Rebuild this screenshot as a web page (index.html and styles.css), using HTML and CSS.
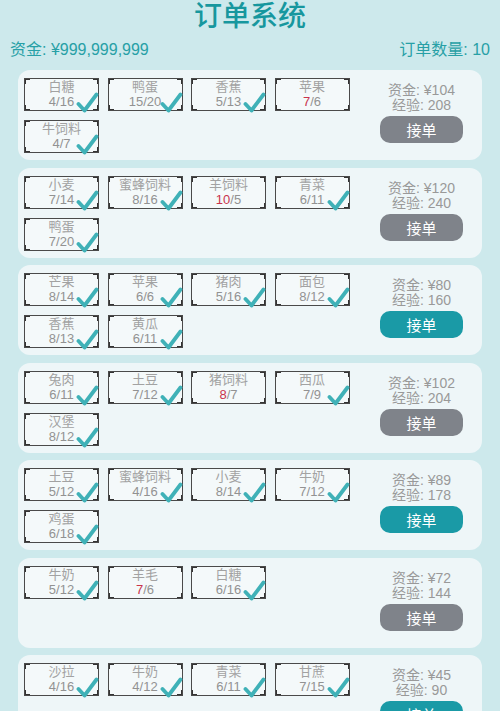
FILE: index.html
```html
<!DOCTYPE html>
<html lang="zh-CN">
<head>
    <meta charset="UTF-8">
    <meta name="viewport" content="width=device-width, initial-scale=1.0">
    <title>订单系统</title>
    <link rel="stylesheet" href="styles.css">
</head>
<body>
    <h1 class="title">订单系统</h1>
    <div class="summary">
        <span>资金: ¥999,999,999</span>
        <span>订单数量: 10</span>
    </div>

    <div class="orders">
        <div class="order">
            <div class="items">
                <div class="item done"><div class="name">白糖</div><div class="count">4/16</div></div>
                <div class="item done"><div class="name">鸭蛋</div><div class="count">15/20</div></div>
                <div class="item done"><div class="name">香蕉</div><div class="count">5/13</div></div>
                <div class="item"><div class="name">苹果</div><div class="count"><span class="short">7</span>/6</div></div>
                <div class="item done"><div class="name">牛饲料</div><div class="count">4/7</div></div>
            </div>
            <div class="reward">
                <div class="stat">资金: ¥104</div>
                <div class="stat">经验: 208</div>
                <button class="take">接单</button>
            </div>
        </div>

        <div class="order">
            <div class="items">
                <div class="item done"><div class="name">小麦</div><div class="count">7/14</div></div>
                <div class="item done"><div class="name">蜜蜂饲料</div><div class="count">8/16</div></div>
                <div class="item"><div class="name">羊饲料</div><div class="count"><span class="short">10</span>/5</div></div>
                <div class="item done"><div class="name">青菜</div><div class="count">6/11</div></div>
                <div class="item done"><div class="name">鸭蛋</div><div class="count">7/20</div></div>
            </div>
            <div class="reward">
                <div class="stat">资金: ¥120</div>
                <div class="stat">经验: 240</div>
                <button class="take">接单</button>
            </div>
        </div>

        <div class="order">
            <div class="items">
                <div class="item done"><div class="name">芒果</div><div class="count">8/14</div></div>
                <div class="item done"><div class="name">苹果</div><div class="count">6/6</div></div>
                <div class="item done"><div class="name">猪肉</div><div class="count">5/16</div></div>
                <div class="item done"><div class="name">面包</div><div class="count">8/12</div></div>
                <div class="item done"><div class="name">香蕉</div><div class="count">8/13</div></div>
                <div class="item done"><div class="name">黄瓜</div><div class="count">6/11</div></div>
            </div>
            <div class="reward">
                <div class="stat">资金: ¥80</div>
                <div class="stat">经验: 160</div>
                <button class="take ready">接单</button>
            </div>
        </div>

        <div class="order">
            <div class="items">
                <div class="item done"><div class="name">兔肉</div><div class="count">6/11</div></div>
                <div class="item done"><div class="name">土豆</div><div class="count">7/12</div></div>
                <div class="item"><div class="name">猪饲料</div><div class="count"><span class="short">8</span>/7</div></div>
                <div class="item done"><div class="name">西瓜</div><div class="count">7/9</div></div>
                <div class="item done"><div class="name">汉堡</div><div class="count">8/12</div></div>
            </div>
            <div class="reward">
                <div class="stat">资金: ¥102</div>
                <div class="stat">经验: 204</div>
                <button class="take">接单</button>
            </div>
        </div>

        <div class="order">
            <div class="items">
                <div class="item done"><div class="name">土豆</div><div class="count">5/12</div></div>
                <div class="item done"><div class="name">蜜蜂饲料</div><div class="count">4/16</div></div>
                <div class="item done"><div class="name">小麦</div><div class="count">8/14</div></div>
                <div class="item done"><div class="name">牛奶</div><div class="count">7/12</div></div>
                <div class="item done"><div class="name">鸡蛋</div><div class="count">6/18</div></div>
            </div>
            <div class="reward">
                <div class="stat">资金: ¥89</div>
                <div class="stat">经验: 178</div>
                <button class="take ready">接单</button>
            </div>
        </div>

        <div class="order">
            <div class="items">
                <div class="item done"><div class="name">牛奶</div><div class="count">5/12</div></div>
                <div class="item"><div class="name">羊毛</div><div class="count"><span class="short">7</span>/6</div></div>
                <div class="item done"><div class="name">白糖</div><div class="count">6/16</div></div>
            </div>
            <div class="reward">
                <div class="stat">资金: ¥72</div>
                <div class="stat">经验: 144</div>
                <button class="take">接单</button>
            </div>
        </div>

        <div class="order">
            <div class="items">
                <div class="item done"><div class="name">沙拉</div><div class="count">4/16</div></div>
                <div class="item done"><div class="name">牛奶</div><div class="count">4/12</div></div>
                <div class="item done"><div class="name">青菜</div><div class="count">6/11</div></div>
                <div class="item done"><div class="name">甘蔗</div><div class="count">7/15</div></div>
            </div>
            <div class="reward">
                <div class="stat">资金: ¥45</div>
                <div class="stat">经验: 90</div>
                <button class="take ready">接单</button>
            </div>
        </div>
    </div>
</body>
</html>
```

FILE: styles.css
```css
:root {
    --bg: #cde9ec;
    --card: #eef6f8;
    --box: #f4f9fa;
    --teal: #17979e;
    --teal-btn: #1a9aa6;
    --gray-btn: #7f838a;
    --text-gray: #999;
    --check: #3fb1b7;
    --short: #c9344c;
    --corner: #333;
}

* {
    box-sizing: border-box;
    margin: 0;
    padding: 0;
}

body {
    font-family: 'Liberation Sans', 'Noto Sans CJK SC', sans-serif;
    background: var(--bg);
    width: 500px;
    height: 711px;
    overflow: hidden;
}

.title {
    font-size: 28px;
    font-weight: 500;
    line-height: 34px;
    text-align: center;
    color: var(--teal);
}

.summary {
    display: flex;
    justify-content: space-between;
    margin-top: 6px;
    padding: 0 10px;
    font-size: 16px;
    line-height: 20px;
    color: #27a0a6;
}

.orders {
    display: flex;
    flex-direction: column;
    gap: 7.5px;
    margin: 10px 18px 0;
}

.order {
    display: flex;
    height: 90px;
    flex-shrink: 0;
    background: var(--card);
    border-radius: 12px;
    padding: 8px 0 0 6px;
}

.items {
    display: grid;
    grid-template-columns: repeat(4, 75px);
    grid-auto-rows: 33px;
    column-gap: 8.5px;
    row-gap: 9px;
    align-content: start;
}

/* frame: grey edges, darker corners */
.item {
    position: relative;
    background:
        linear-gradient(var(--corner), var(--corner)) left top / 5px 1px,
        linear-gradient(var(--corner), var(--corner)) left top / 1px 5px,
        linear-gradient(var(--corner), var(--corner)) right top / 5px 1px,
        linear-gradient(var(--corner), var(--corner)) right top / 1px 5px,
        linear-gradient(var(--corner), var(--corner)) left bottom / 5px 1px,
        linear-gradient(var(--corner), var(--corner)) left bottom / 1px 5px,
        linear-gradient(var(--corner), var(--corner)) right bottom / 5px 1px,
        linear-gradient(var(--corner), var(--corner)) right bottom / 1px 5px,
        var(--box);
    background-repeat: no-repeat;
    border: 1px solid #4a4a4a;
    text-align: center;
    font-size: 13px;
    line-height: 15px;
    color: #a2a2a2;
    padding-top: 0;
}

.item .count {
    color: #929292;
}

.short {
    color: var(--short);
}

.item.done::after {
    content: '';
    position: absolute;
    right: -1px;
    bottom: -3px;
    width: 23px;
    height: 21px;
    background: url("data:image/svg+xml,%3Csvg xmlns='http://www.w3.org/2000/svg' viewBox='0 0 23 21'%3E%3Cpath d='M2.5 12 L8.5 18.5 L20.5 2.5' fill='none' stroke='%233fb1b7' stroke-width='3.8' stroke-linecap='round' stroke-linejoin='round'/%3E%3C/svg%3E") no-repeat center / contain;
}

.reward {
    width: 83px;
    margin: 0 19px 0 auto;
    padding-top: 5px;
    text-align: center;
}

.stat {
    font-size: 14px;
    line-height: 15px;
    color: var(--text-gray);
    white-space: nowrap;
}

.take {
    display: block;
    width: 83px;
    height: 27px;
    margin-top: 3px;
    border: none;
    border-radius: 10px;
    background: var(--gray-btn);
    color: #fff;
    font-family: inherit;
    font-size: 15px;
}

.take.ready {
    background: var(--teal-btn);
}
```
